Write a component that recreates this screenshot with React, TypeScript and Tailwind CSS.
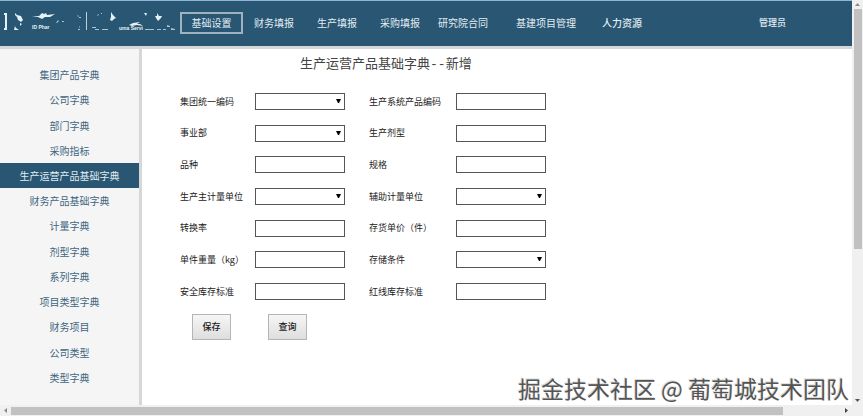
import { Fragment } from "react";

const navItems = [
  "基础设置",
  "财务填报",
  "生产填报",
  "采购填报",
  "研究院合同",
  "基建项目管理",
  "人力资源",
];

const menuItems = [
  "集团产品字典",
  "公司字典",
  "部门字典",
  "采购指标",
  "生产运营产品基础字典",
  "财务产品基础字典",
  "计量字典",
  "剂型字典",
  "系列字典",
  "项目类型字典",
  "财务项目",
  "公司类型",
  "类型字典",
];

const fields = [
  { id: "groupCode", label: "集团统一编码", select: true },
  { id: "productCode", label: "生产系统产品编码" },
  { id: "division", label: "事业部", select: true },
  { id: "dosage", label: "生产剂型" },
  { id: "variety", label: "品种" },
  { id: "spec", label: "规格" },
  { id: "mainUnit", label: "生产主计量单位", select: true },
  { id: "auxUnit", label: "辅助计量单位", select: true },
  { id: "rate", label: "转换率" },
  { id: "price", label: "存货单价（件）" },
  { id: "weight", label: "单件重量（kg）" },
  { id: "storage", label: "存储条件", select: true },
  { id: "safeStock", label: "安全库存标准" },
  { id: "redLine", label: "红线库存标准" },
];

const Logo = () => (
  <svg
    viewBox="0 0 176 24"
    className="h-6 w-[176px] shrink-0 fill-[#e4f1f6]"
    role="img"
    aria-label="Logo"
  >
    <path d="M4 2h3v17H4v-2h1V4H4z" />
    <path d="M15 2l2 2 4 1 2 4-2 2-3-2-1-3-2-2z" />
    <path d="M14 19l1-4 1 2 3 2zM20 12l2 1-2 2z" />
    <path d="M32 5l7 0 3-3 2 1 2-1 1 2 8-1-5 3-5 0-3 2-4-2z" />
    <path
      d="M56 12l2-3 1 1-2 2zM62 10h2v1h-2zM77 4l2 1-1 1zM79 6h2v1h-2zM79 15l1 1-1 1zM78 18h2v1h-2z"
      className="opacity-70"
    />
    <path d="M86 1h1v18h-1z" className="opacity-80" />
    <path
      d="M97 4l2-1-1 2zM101 2h1v1h-1zM92 16h4v1h-4zM95 18h4v1h-4zM102 18h6v1h-6z"
      className="opacity-70"
    />
    <path d="M111 1l2 3 3 3-2 1-2 2-2-1 1-3z" />
    <path d="M129 14l4-2 7-1-3 2h3l3 2-6-1-5 1z" />
    <path d="M144 2l3 0-1 3zM157 2l2 3 3 0-1 2-3 3-2-3-1-2 2 0z" />
    <path
      d="M145 18h9v1h-9zM157 18h4v1h-4zM163 18h3v1h-3zM167 14l3 1v1h-3zM171 17l4 1v1h-4z"
      className="opacity-70"
    />
    <text x="32" y="18" className="font-['Liberation_Sans'] text-[5px] font-bold">
      ID Phar
    </text>
    <text x="119" y="19" className="font-['Liberation_Sans'] text-[5px] font-bold">
      uma Servi
    </text>
  </svg>
);

const Header = () => (
  <header className="flex h-[49px] items-center border-t border-b-3 border-t-[#8fb6d2] border-b-[#d4d6d8] bg-[#285673] pb-0.5 text-[10px] text-[#e3edf2]">
    <Logo />
    <nav className="ml-1 grid shrink-0 grid-cols-[63px_63px_63px_58px_78px_86px_80px] items-center">
      {navItems.map((item, i) => (
        <a
          key={item}
          href="#"
          className={
            i === 0
              ? "flex h-[22px] items-center justify-center border-2 border-[#9fb2c0]"
              : i === 6
                ? "pl-[11px] font-medium"
                : "pl-[11px]"
          }
        >
          {item}
        </a>
      ))}
    </nav>
    <a href="#" className="mr-[66px] ml-auto text-[9px] font-medium">
      管理员
    </a>
  </header>
);

const Sidebar = () => (
  <aside className="w-[142px] shrink-0 border-r-3 border-[#d6d7d8] bg-[#f5f5f5] pt-[13px]">
    <ul className="grid h-[328px] auto-rows-fr text-center text-[10px] text-[#3d6680]">
      {menuItems.map((item) => (
        <li key={item} className="flex">
          <a
            href="#"
            className={
              item === "生产运营产品基础字典"
                ? "flex flex-1 items-center justify-center bg-[#285673] text-[#e3edf2]"
                : "flex flex-1 items-center justify-center"
            }
          >
            {item}
          </a>
        </li>
      ))}
    </ul>
  </aside>
);

const ProductForm = () => (
  <form className="px-[38px] text-[9px] text-[#222]">
    <div className="grid h-[207px] grid-cols-[75px_114px_87px_90px] content-between items-center">
      {fields.map(({ id, label, select }) => (
        <Fragment key={id}>
          <label htmlFor={id} className="whitespace-nowrap">
            {label}
          </label>
          {select ? (
            <div className="relative h-[17px] w-[90px]">
              <select
                id={id}
                className="block h-full w-full appearance-none border border-[#555] bg-white"
              />
              <svg
                viewBox="0 0 5 5"
                className="pointer-events-none absolute top-1.5 right-1 size-[5px] fill-black"
              >
                <path d="M0 0h5L3 4H2z" />
              </svg>
            </div>
          ) : (
            <input
              id={id}
              type="text"
              className="block h-[17px] w-[90px] border border-[#555] bg-white"
            />
          )}
        </Fragment>
      ))}
    </div>
    <div className="mt-3.5 flex gap-[37px] pl-3">
      {["保存", "查询"].map((text) => (
        <button
          key={text}
          type="button"
          className="h-[26px] w-[39px] border border-[#b5b5b5] bg-linear-to-b from-[#f6f6f6] to-[#dedede] font-medium"
        >
          {text}
        </button>
      ))}
    </div>
  </form>
);

const App = () => {
  return (
    <div className="flex min-h-screen flex-col bg-white font-['Noto_Sans_CJK_SC',sans-serif]">
      <div className="flex flex-1">
        <div className="flex min-w-0 flex-1 flex-col">
          <Header />
          <div className="flex flex-1">
            <Sidebar />
            <main className="flex-1">
              <h1 className="mt-1 mb-4.5 pl-[158px] text-[13px] leading-5 text-[#444]">
                生产运营产品基础字典
                <span className="font-['Liberation_Mono']">--</span>新增
              </h1>
              <ProductForm />
            </main>
          </div>
        </div>
        <div className="flex w-[11px] flex-col items-center bg-[#f0f0f0]">
          <svg viewBox="0 0 11 9" className="h-[9px] w-[11px] fill-[#8a8a8a]">
            <path d="M3 6l2.5-3L8 6z" />
          </svg>
          <div className="w-2 grow-[62] bg-[#c1c1c1]" />
          <div className="grow-[38]" />
          <svg viewBox="0 0 11 9" className="h-[9px] w-[11px] fill-[#555]">
            <path d="M3 3h5L5.5 6z" />
          </svg>
        </div>
      </div>
      <div className="flex h-[11px] items-center bg-[#f0f0f0] pr-[11px]">
        <svg viewBox="0 0 11 11" className="size-[11px] fill-[#8a8a8a]">
          <path d="M7 3v5L4 5.5z" />
        </svg>
        <div className="h-2 grow-[93] bg-[#c1c1c1]" />
        <div className="grow-[7]" />
        <svg viewBox="0 0 11 11" className="size-[11px] fill-[#444]">
          <path d="M4 3v5l3-2.5z" />
        </svg>
      </div>
      <p className="pointer-events-none absolute right-3.5 bottom-3 text-[23px] leading-8 text-[#555] [text-shadow:-1px_-1px_0_#ddd]">
        掘金技术社区 @ 葡萄城技术团队
      </p>
    </div>
  );
};

export default App;
